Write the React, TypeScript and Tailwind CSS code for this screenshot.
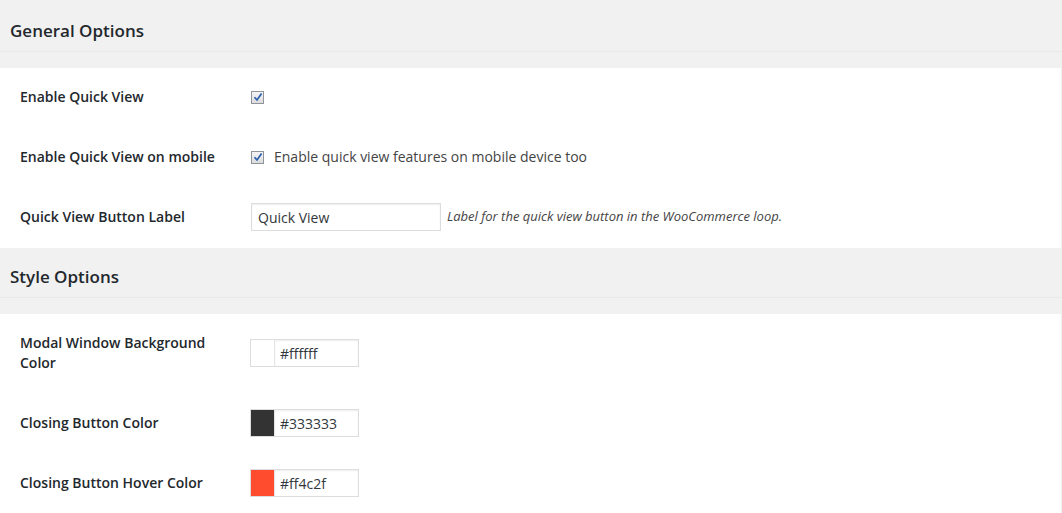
import React from 'react';

function Check() {
    return (
        <span className="w-[13px] h-[13px] border border-[#8f959b] bg-gradient-to-b from-[#f4f4f4] to-[#dcdcdc] flex items-center justify-center shrink-0">
            <svg width="10" height="10" viewBox="0 0 10 10">
                <path d="M1.5 5.2 L4 8 L8.6 1.4" fill="none" stroke="#2a5fb0" strokeWidth="1.7" />
            </svg>
        </span>
    );
}

function SectionHeader({ title, first }: { title: string; first?: boolean }) {
    return (
        <div className="bg-[#f1f1f1]">
            <div
                className={`px-[10px] border-b border-[#e9e9e9] text-[17px] leading-[24px] font-semibold text-[#23282d] ${first ? 'h-[52px] pt-[19px]' : 'h-[50px] pt-[17px]'}`}
            >
                {title}
            </div>
            <div className="h-[16px]" />
        </div>
    );
}

function Row({ label, children, tall }: { label: React.ReactNode; children: React.ReactNode; tall?: boolean }) {
    return (
        <div className={`flex items-center pb-[2px] ${tall ? 'h-[80px]' : 'h-[60px]'}`}>
            <div className="w-[250px] pl-[20px] pr-[20px] text-[14px] leading-[20px] font-semibold text-[#23282d]">{label}</div>
            <div className="flex items-center">{children}</div>
        </div>
    );
}

function ColorField({ color, value }: { color: string; value: string }) {
    return (
        <div className="flex h-[28px] border border-[#dddddd]">
            <span className={`w-[24px] h-full ${color} border-r border-[#e5e5e5]`} />
            <span className="w-[83px] flex items-center pl-[5px] text-[14px] text-[#32373c] shadow-[inset_0_1px_2px_rgba(0,0,0,0.07)]">
                {value}
            </span>
        </div>
    );
}

export default function App() {
    return (
        <div className="w-[1062px] h-[513px] bg-[#f1f1f1] overflow-hidden font-['Open_Sans',sans-serif]">
            <SectionHeader title="General Options" first />
            <div className="bg-white w-[1061px]">
                <Row label="Enable Quick View">
                    <span className="ml-[1px]"><Check /></span>
                </Row>
                <Row label="Enable Quick View on mobile">
                    <span className="ml-[1px]"><Check /></span>
                    <span className="ml-[10px] -mt-[2px] text-[14px] text-[#444]">Enable quick view features on mobile device too</span>
                </Row>
                <Row label="Quick View Button Label">
                    <div className="ml-[1px] w-[190px] h-[28px] border border-[#dddddd] shadow-[inset_0_1px_2px_rgba(0,0,0,0.07)] flex items-center px-[6px] text-[14px] text-[#32373c]">
                        Quick View
                    </div>
                    <span className="ml-[6px] text-[13px] italic text-[#444]">Label for the quick view button in the WooCommerce loop.</span>
                </Row>
            </div>
            <SectionHeader title="Style Options" />
            <div className="bg-white w-[1061px]">
                <Row label={<>Modal Window Background<br />Color</>} tall>
                    <ColorField color="bg-white" value="#ffffff" />
                </Row>
                <Row label="Closing Button Color">
                    <ColorField color="bg-[#333333]" value="#333333" />
                </Row>
                <Row label="Closing Button Hover Color">
                    <ColorField color="bg-[#ff4c2f]" value="#ff4c2f" />
                </Row>
            </div>
        </div>
    );
}
